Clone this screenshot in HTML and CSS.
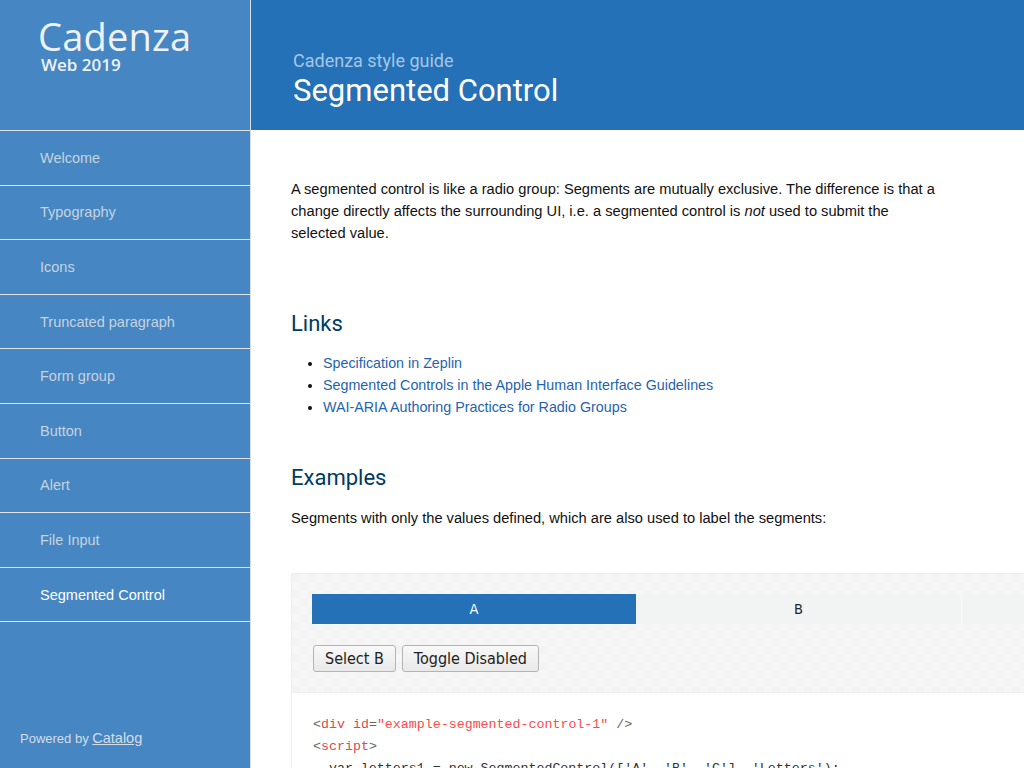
FILE: index.html
```html
<!DOCTYPE html>
<html>
<head>
<meta charset="utf-8">
<title>Segmented Control – Cadenza style guide</title>
<link rel="stylesheet" href="styles.css">
</head>
<body>
<div class="app">
  <aside class="sidebar">
    <div class="brand">
      <div class="brand-name">Cadenza</div>
      <div class="brand-sub">Web 2019</div>
    </div>
    <nav class="nav">
      <a class="nav-item" href="#">Welcome</a>
      <a class="nav-item" href="#">Typography</a>
      <a class="nav-item" href="#">Icons</a>
      <a class="nav-item" href="#">Truncated paragraph</a>
      <a class="nav-item" href="#">Form group</a>
      <a class="nav-item" href="#">Button</a>
      <a class="nav-item" href="#">Alert</a>
      <a class="nav-item" href="#">File Input</a>
      <a class="nav-item active" href="#">Segmented Control</a>
    </nav>
    <div class="powered">Powered by <a href="#">Catalog</a></div>
  </aside>
  <main class="main">
    <header class="page-header">
      <div class="page-super">Cadenza style guide</div>
      <h1 class="page-title">Segmented Control</h1>
    </header>
    <div class="content">
      <p class="intro">A segmented control is like a radio group: Segments are mutually exclusive. The difference is that a change directly affects the surrounding UI, i.e. a segmented control is <em>not</em> used to submit the selected value.</p>

      <h2 class="heading links-heading">Links</h2>
      <ul class="links">
        <li><a href="#">Specification in Zeplin</a></li>
        <li><a href="#">Segmented Controls in the Apple Human Interface Guidelines</a></li>
        <li><a href="#">WAI-ARIA Authoring Practices for Radio Groups</a></li>
      </ul>

      <h2 class="heading examples-heading">Examples</h2>
      <p class="text">Segments with only the values defined, which are also used to label the segments:</p>

      <div class="example">
        <div class="preview">
          <div class="segments">
            <div class="segment selected">A</div>
            <div class="segment">B</div>
            <div class="segment">C</div>
          </div>
          <div class="buttons">
            <button class="btn">Select B</button>
            <button class="btn">Toggle Disabled</button>
          </div>
        </div>
        <pre class="code"><span class="p">&lt;</span><span class="t">div</span> <span class="t">id</span><span class="p">=</span><span class="s">"example-segmented-control-1"</span> <span class="p">/&gt;</span>
<span class="p">&lt;</span><span class="t">script</span><span class="p">&gt;</span>
  var letters1 = new SegmentedControl(['A', 'B', 'C'], 'Letters');</pre>
      </div>
    </div>
  </main>
</div>
</body>
</html>
```

FILE: styles.css
```css
* { box-sizing: border-box; }
html, body { margin: 0; padding: 0; height: 100%; }
body {
  font-family: "Liberation Sans", Arial, sans-serif;
  font-size: 14.67px;
  color: #111;
  background: #fff;
  overflow: hidden;
}
.app {
  display: flex;
  height: 768px;
}
.sidebar {
  width: 251px;
  flex: 0 0 251px;
  background: #4586c3;
  border-right: 1px solid #d8dde3;
  display: flex;
  flex-direction: column;
}
.brand {
  height: 131px;
  border-bottom: 1px solid #dfe4ea;
  padding: 15px 0 0 38px;
  color: #eef3f9;
}
.brand-name {
  font-family: "Open Sans", "Noto Sans", sans-serif;
  font-size: 38px;
  line-height: 42px;
  letter-spacing: 0.2px;
}
.brand-sub {
  font-family: "Open Sans", "Noto Sans", sans-serif;
  font-size: 17px;
  font-weight: 600;
  line-height: 16px;
  padding-left: 3px;
}
.nav {
  display: flex;
  flex-direction: column;
}
.nav-item {
  display: flex;
  align-items: center;
  height: 54.6px;
  padding-left: 40px;
  border-bottom: 1px solid #dfe4ea;
  color: #c7d3df;
  text-decoration: none;
  font-size: 14.5px;
}
.nav-item.active { color: #ffffff; }
.powered {
  margin-top: auto;
  padding: 0 0 22px 20px;
  color: #d4dde6;
  font-size: 13px;
}
.powered a {
  color: #d4dde6;
  font-size: 14.5px;
  text-decoration: underline;
}
.main {
  flex: 1;
  min-width: 0;
  overflow: hidden;
}
.page-header {
  height: 130px;
  background: #2471b7;
  padding: 50px 0 0 42px;
}
.page-super {
  font-family: Roboto, sans-serif;
  font-size: 18px;
  line-height: 22px;
  color: #a6c6e6;
}
.page-title {
  margin: 0;
  font-family: Roboto, sans-serif;
  font-weight: 400;
  font-size: 31px;
  line-height: 38px;
  color: #fff;
}
.content {
  padding: 48px 0 0 40px;
}
.intro {
  margin: 0;
  width: 652px;
  line-height: 22px;
}
.heading {
  margin: 0;
  font-family: Roboto, sans-serif;
  font-weight: 400;
  font-size: 22px;
  line-height: 28px;
  color: #003b61;
}
.links-heading { margin-top: 66px; }
.links {
  margin: 14px 0 0 0;
  padding-left: 32px;
  line-height: 22px;
  font-size: 14.3px;
}
.links a {
  color: #1f63b0;
  text-decoration: none;
}
.examples-heading { margin-top: 46px; }
.text {
  margin: 15px 0 0 0;
  line-height: 22px;
}
.example {
  margin-top: 44px;
  width: 1020px;
  border: 1px solid #eceeef;
}
.preview {
  background-color: #f3f3f3;
  background-image:
    linear-gradient(45deg, #f6f6f6 25%, transparent 25%, transparent 75%, #f6f6f6 75%),
    linear-gradient(45deg, #f6f6f6 25%, transparent 25%, transparent 75%, #f6f6f6 75%);
  background-size: 16px 16px;
  background-position: 0 0, 8px 8px;
  padding: 20px 20px 20px 20px;
}
.segments {
  display: flex;
  height: 30px;
}
.segment {
  flex: 0 0 326px;
  display: flex;
  align-items: center;
  justify-content: center;
  background: #f2f3f3;
  color: #1c2630;
  font-family: "DejaVu Sans Condensed", "DejaVu Sans", sans-serif;
  font-size: 14.5px;
  border-right: 1px solid #f9f9f9;
}
.segment.selected {
  flex-basis: 324px;
  background: #2471b7;
  color: #fff;
  border-right: none;
}
.buttons {
  display: flex;
  gap: 6px;
  margin-top: 21px;
  padding-left: 1px;
}
.btn {
  font-family: "DejaVu Sans Condensed", "DejaVu Sans", sans-serif;
  font-size: 16px;
  height: 27px;
  padding: 0 11px;
  border: 1px solid #b4b4b4;
  border-radius: 3px;
  background: linear-gradient(#f8f8f8, #e9e9e9);
  color: #222;
}
.code {
  margin: 0;
  background: #fff;
  padding: 21px 21px 10px 21px;
  font-family: "Liberation Mono", "DejaVu Sans Mono", monospace;
  font-size: 13.3px;
  line-height: 22px;
  color: #333;
  border-top: 1px solid #eceeef;
}
.code .p { color: #666; }
.code .t { color: #e0474c; }
.code .s { color: #ff4a4a; }
```
